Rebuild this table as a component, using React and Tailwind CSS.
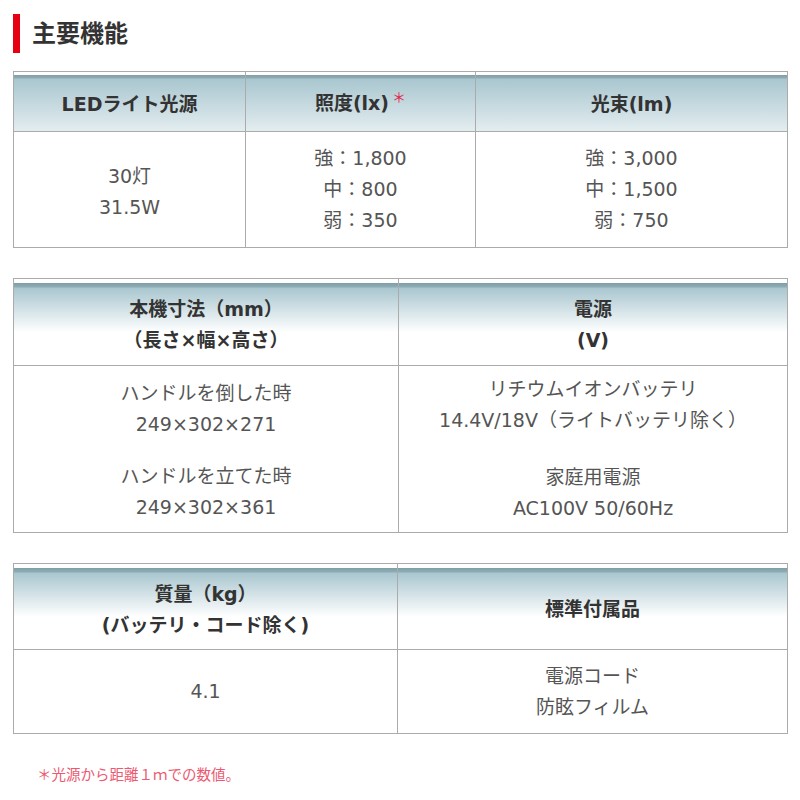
import React from "react";

const FONT = { fontFamily: '"DejaVu Sans","Noto Sans CJK JP",sans-serif' };

const HEAD1 =
  "bg-[linear-gradient(to_bottom,#ffffff_0px,#ffffff_3px,#7f9fa8_3px,#8eacb4_6px,#a9c6cf_7px,#e3edf0_100%)]";
const HEAD2 =
  "bg-[linear-gradient(to_bottom,#ffffff_0px,#ffffff_4px,#7f9fa8_4px,#8eacb4_8px,#a9c6cf_9px,#ffffff_62%,#ffffff_100%)]";

function HeadCell({ children, grad, first }) {
  return (
    <div
      className={`${grad} flex flex-col items-center justify-center pt-[6px] text-[19px] leading-[31px] font-bold text-[#333] ${
        first ? "" : "border-l border-[#ababab]"
      }`}
    >
      {children}
    </div>
  );
}

function BodyCell({ children, first, className = "" }) {
  return (
    <div
      className={`flex flex-col items-center justify-center text-[19px] leading-[31px] text-[#555] border-t border-[#ababab] ${
        first ? "" : "border-l"
      } ${className}`}
    >
      {children}
    </div>
  );
}

export default function App() {
  return (
    <div className="w-[800px] h-[800px] bg-white pt-[14px] pl-[13px]" style={FONT}>
      <div className="flex items-center h-[39px]">
        <div className="w-[7px] h-full bg-[#e60012]" />
        <div className="ml-[12px] text-[24px] font-bold text-[#333] leading-none">主要機能</div>
      </div>

      {/* Table 1 */}
      <div className="mt-[18px] w-[775px] border border-[#ababab] grid grid-cols-[231px_230px_1fr] grid-rows-[59px_116px]">
        <HeadCell grad={HEAD1} first>
          <span>LEDライト光源</span>
        </HeadCell>
        <HeadCell grad={HEAD1}>
          <span>
            照度(lx)
            <span className="relative top-[-8px] text-[#e0284a] font-normal text-[14px] ml-[3px]">＊</span>
          </span>
        </HeadCell>
        <HeadCell grad={HEAD1}>
          <span>光束(lm)</span>
        </HeadCell>
        <BodyCell first className="pt-[5px]">
          <span>30灯</span>
          <span>31.5W</span>
        </BodyCell>
        <BodyCell className="border-[#ababab]">
          <span>強：1,800</span>
          <span>中：800</span>
          <span>弱：350</span>
        </BodyCell>
        <BodyCell className="border-[#ababab]">
          <span>強：3,000</span>
          <span>中：1,500</span>
          <span>弱：750</span>
        </BodyCell>
      </div>

      {/* Table 2 */}
      <div className="mt-[30px] w-[775px] border border-[#ababab] grid grid-cols-[384px_1fr] grid-rows-[86px_167px]">
        <HeadCell grad={HEAD2} first>
          <span>本機寸法（mm）</span>
          <span>（長さ×幅×高さ）</span>
        </HeadCell>
        <HeadCell grad={HEAD2}>
          <span>電源</span>
          <span>(V)</span>
        </HeadCell>
        <BodyCell first className="gap-[21px] pt-[2px]">
          <div className="flex flex-col items-center">
            <span>ハンドルを倒した時</span>
            <span>249×302×271</span>
          </div>
          <div className="flex flex-col items-center">
            <span>ハンドルを立てた時</span>
            <span>249×302×361</span>
          </div>
        </BodyCell>
        <BodyCell className="border-[#ababab] gap-[26px]">
          <div className="flex flex-col items-center">
            <span>リチウムイオンバッテリ</span>
            <span>14.4V/18V（ライトバッテリ除く）</span>
          </div>
          <div className="flex flex-col items-center">
            <span>家庭用電源</span>
            <span>AC100V 50/60Hz</span>
          </div>
        </BodyCell>
      </div>

      {/* Table 3 */}
      <div className="mt-[30px] w-[775px] border border-[#ababab] grid grid-cols-[383px_1fr] grid-rows-[85px_84px]">
        <HeadCell grad={HEAD2} first>
          <span>質量（kg）</span>
          <span>(バッテリ・コード除く)</span>
        </HeadCell>
        <HeadCell grad={HEAD2}>
          <span>標準付属品</span>
        </HeadCell>
        <BodyCell first>
          <span>4.1</span>
        </BodyCell>
        <BodyCell className="border-[#ababab]">
          <span>電源コード</span>
          <span>防眩フィルム</span>
        </BodyCell>
      </div>

      <div className="mt-[34px] ml-[24px] text-[14.5px] leading-none text-[#ec5a72]">＊光源から距離１ｍでの数値。</div>
    </div>
  );
}
